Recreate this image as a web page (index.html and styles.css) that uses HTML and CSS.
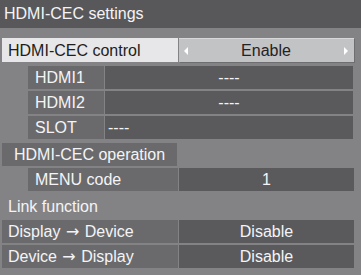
FILE: index.html
```html
<!DOCTYPE html>
<html>
<head>
    <title>HDMI-CEC settings</title>
    <link rel="stylesheet" href="styles.css">
</head>
<body>
    <div class="title">HDMI-CEC settings</div>
    <div class="menu">
        <div class="row row-top">
            <div class="label label-light">HDMI-CEC control</div>
            <div class="value value-light">
                <span class="arrow arrow-left"></span>
                <span>Enable</span>
                <span class="arrow arrow-right"></span>
            </div>
        </div>
        <div class="row row-sub row-hdmi1">
            <div class="label label-short">HDMI1</div>
            <div class="value value-wide">----</div>
        </div>
        <div class="row row-sub">
            <div class="label label-short">HDMI2</div>
            <div class="value value-wide">----</div>
        </div>
        <div class="row row-sub">
            <div class="label label-short">SLOT</div>
            <div class="value value-wide value-left">----</div>
        </div>
        <div class="row row-op">
            <div class="label label-op">HDMI-CEC operation</div>
        </div>
        <div class="row row-sub">
            <div class="label label-mid">MENU code</div>
            <div class="value">1</div>
        </div>
        <div class="heading">Link function</div>
        <div class="row">
            <div class="label">Display <span class="to">&rarr;</span> Device</div>
            <div class="value">Disable</div>
        </div>
        <div class="row">
            <div class="label">Device <span class="to">&rarr;</span> Display</div>
            <div class="value">Disable</div>
        </div>
    </div>
</body>
</html>
```

FILE: styles.css
```css
body {
    margin: 0;
    width: 361px;
    height: 275px;
    background-color: #838386;
    font-family: "Liberation Sans", Arial, sans-serif;
    font-size: 16px;
    color: #f4f4f6;
    overflow: hidden;
}

.title {
    height: 28px;
    line-height: 28px;
    padding-left: 4px;
    background-color: #58585a;
}

.menu {
    display: flex;
    flex-direction: column;
    padding: 10px 0 0 2px;
}

.row {
    display: flex;
    gap: 1px;
    height: 23px;
    line-height: 23px;
    margin-bottom: 2px;
}

.row-top {
    height: 24px;
    line-height: 25px;
    margin-bottom: 4px;
}

.row-sub {
    margin-left: 26px;
}

.row-op {
    margin-top: 2px;
}

.label {
    width: 170px;
    padding-left: 6px;
    background-color: #6a6a6d;
    white-space: nowrap;
}

.label-light {
    background-color: #e7e7e9;
    color: #1e1e20;
}

.label-short {
    width: 69px;
    padding-left: 7px;
}

.label-mid {
    width: 143px;
    padding-left: 7px;
}

.label-op {
    width: 163px;
    padding-left: 12px;
}

.to {
    font-family: "DejaVu Sans", sans-serif;
    font-size: 16px;
    margin: 0 1px;
}

.value {
    width: 175px;
    text-align: center;
    background-color: #5a5a5d;
}

.value-wide {
    width: 248px;
}

.value-left {
    text-align: left;
    padding-left: 3px;
    width: 245px;
}

.value-light {
    display: flex;
    justify-content: space-between;
    align-items: center;
    padding: 0 6px 0 5px;
    width: 164px;
    background-color: #c2c3c5;
    color: #222224;
    border-top: 1px solid #d8d8da;
    box-shadow: 1px 1px 0 #6e6e70;
}

.arrow {
    width: 0;
    height: 0;
    border-top: 4px solid transparent;
    border-bottom: 4px solid transparent;
}

.arrow-left {
    border-right: 4px solid #ffffff;
}

.arrow-right {
    border-left: 4px solid #ffffff;
}

.heading {
    height: 27px;
    line-height: 27px;
    padding-left: 6px;
}
```
